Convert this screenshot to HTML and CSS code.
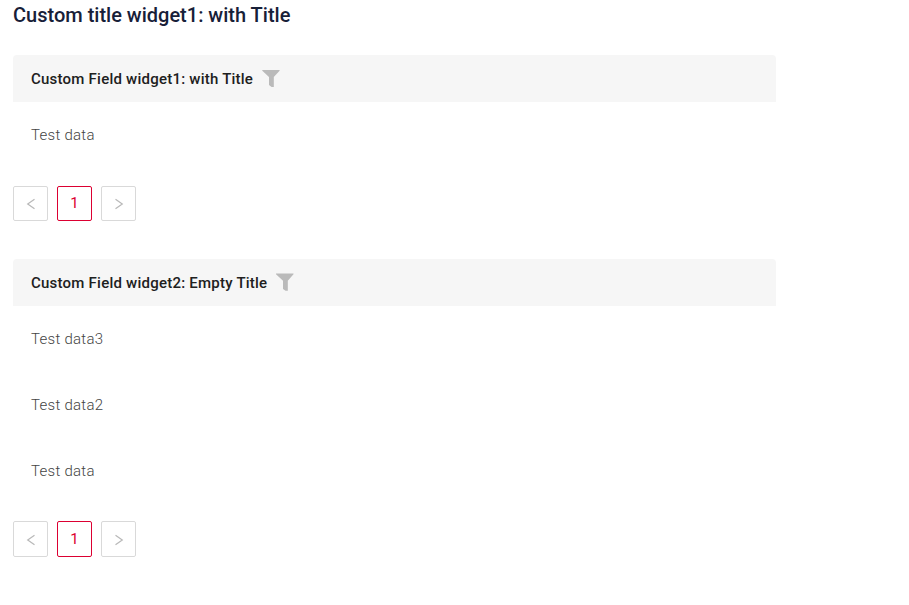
FILE: index.html
```html
<!DOCTYPE html>
<html lang="en">
<head>
<meta charset="utf-8">
<title>Custom widgets</title>
<link rel="stylesheet" href="styles.css">
</head>
<body>
<main>
<h1>Custom title widget1: with Title</h1>
<section class="widget">
<header class="head"><h2>Custom Field widget1: with Title</h2><svg class="funnel" viewBox="0 0 18 18"><path d="M.3 1h17.3v.8L11.8 8v10H9.6L7 16.1V8L.3 1.8z"/></svg></header>
<div class="row">Test data</div>
<nav class="pager"><button><svg viewBox="0 0 10 12"><path d="M8.5 1.2 1.7 6l6.8 4.8"/></svg></button><button class="active">1</button><button><svg viewBox="0 0 10 12"><path d="m1.5 1.2 6.8 4.8-6.8 4.8"/></svg></button></nav>
</section>
<section class="widget second">
<header class="head"><h2>Custom Field widget2: Empty Title</h2><svg class="funnel" viewBox="0 0 18 18"><path d="M0 .5h17.5v.8L11.8 7.8v10H9.6L7 16.1V7.8L0 1.3z"/></svg></header>
<div class="row">Test data3</div>
<div class="row">Test data2</div>
<div class="row">Test data</div>
<nav class="pager"><button><svg viewBox="0 0 10 12"><path d="M8.5 1.2 1.7 6l6.8 4.8"/></svg></button><button class="active">1</button><button><svg viewBox="0 0 10 12"><path d="m1.5 1.2 6.8 4.8-6.8 4.8"/></svg></button></nav>
</section>
</main>
</body>
</html>
```
FILE: styles.css
```css
* { box-sizing: border-box; }
body { margin: 0; background: #fff; font-family: Roboto, sans-serif; overflow: hidden; }
main { width: 776px; padding-left: 13px; }
h1 { margin: 0; height: 55px; padding-top: 3px; font-size: 20px; line-height: 24px; font-weight: 500; color: #172038; }
.head { display: flex; align-items: center; gap: 9px; height: 47px; padding-left: 18px; background: #f6f6f6; border-radius: 4px 4px 0 0; }
h2 { margin: 0; font-size: 15px; line-height: 20px; font-weight: 500; letter-spacing: .23px; color: #202020; }
.funnel { width: 18px; height: 18px; margin-bottom: 1px; fill: #bababa; }
.row { height: 66px; padding-left: 18px; font-size: 15px; line-height: 66px; font-weight: 300; color: #444; letter-spacing: .27px; }
.pager { display: flex; gap: 9px; margin-top: 18px; }
.pager button { display: flex; align-items: center; justify-content: center; width: 35px; height: 35px; padding: 0; border: 1px solid #d9d9d9; border-radius: 2px; background: #fff; font: 15px Roboto, sans-serif; }
.pager .active { padding-bottom: 1px; border-color: #dc0032; color: #dc0032; }
.pager svg { width: 10px; height: 12px; margin-top: 1px; fill: none; stroke: #b8b8b8; stroke-width: 1.2; }
.second { margin-top: 38px; }
.second .pager { margin-top: 17px; }
.second .pager button { height: 36px; }
```
